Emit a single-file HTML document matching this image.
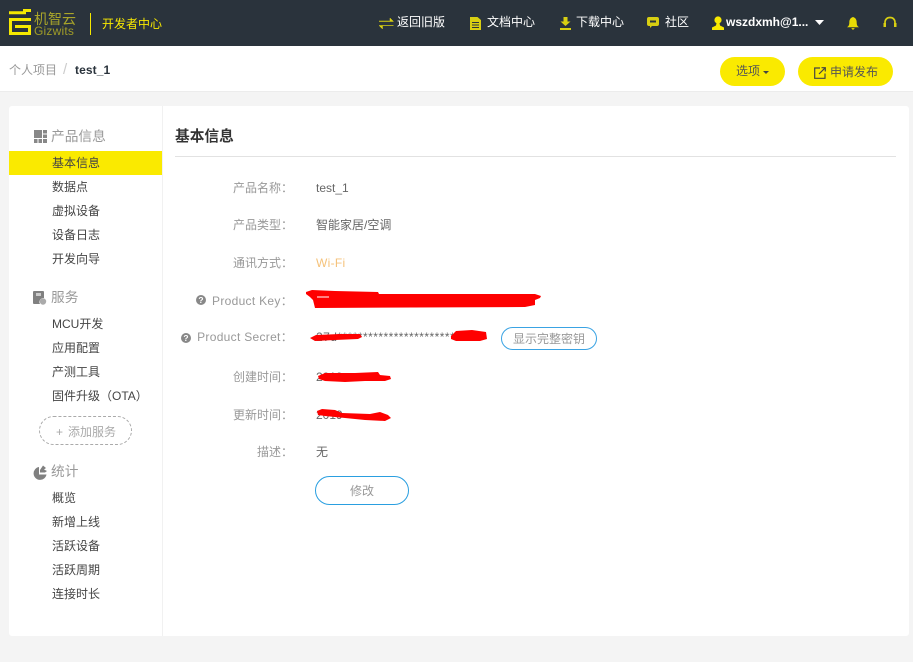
<!DOCTYPE html>
<html lang="zh"><head><meta charset="utf-8"><title>基本信息</title>
<style>
html,body{margin:0;padding:0}
body{width:913px;height:662px;overflow:hidden;background:#f4f4f4;position:relative;font-family:"Liberation Sans","Noto Sans CJK SC",sans-serif;font-size:12px;color:#333}
.a{position:absolute}
.t{position:absolute;white-space:nowrap;line-height:20px;height:20px}
.nav{color:#fff;font-size:12px;top:12px}
.m{left:52px;color:#444;font-size:12px}
.h{left:51px;color:#999;font-size:13.7px}
.l{color:#999;font-size:12px;right:620px;text-align:right}
.v{left:316px;color:#666;font-size:12px}
svg{position:absolute;display:block}
</style></head><body>
<div class="a" style="left:0;top:0;width:913px;height:46px;background:#2a333c"></div>
<svg style="left:9px;top:9px" width="23" height="27" viewBox="0 0 23 27"><path d="M0 3.800H15.500V1.500H22" fill="none" stroke="#f5e800" stroke-width="3"/><path d="M22 10.500H1.500V24.500H20.500V17.500H6" fill="none" stroke="#f5e800" stroke-width="3"/></svg>
<div class="t" style="left:34px;top:9px;color:#a9a52a;font-size:14px">机智云</div>
<div class="t" style="left:34px;top:21px;color:#a09c28;font-size:12px;letter-spacing:.2px">Gizwits</div>
<div class="a" style="left:90px;top:13px;width:1px;height:22px;background:#f5e800"></div>
<div class="t" style="left:102px;top:14px;color:#f8e900;font-size:12px">开发者中心</div>

<svg style="left:379px;top:17px" width="15" height="13" viewBox="0 0 15 13"><path d="M0 4H11V1L14.500 4.500H0ZM14.500 8.500H3.500V12L0 8.500H14.500Z" fill="#d8cf12" stroke="#d8cf12" stroke-width=".5"/></svg>
<div class="t nav" style="left:397px">返回旧版</div>
<svg style="left:470px;top:17px" width="11" height="13" viewBox="0 0 11 13"><path d="M0 0H7.500L11 3V13H0Z" fill="#d8cf12"/><path d="M2 5.500H9M2 8H9M2 10.500H9" stroke="#2a333c"/></svg>
<div class="t nav" style="left:487px">文档中心</div>
<svg style="left:560px;top:17px" width="11" height="13" viewBox="0 0 11 13"><path d="M3.500 0H7.500V4.500H10.500L5.500 9L.5 4.500H3.500ZM0 11H11V13H0Z" fill="#d8cf12"/></svg>
<div class="t nav" style="left:576px">下载中心</div>
<svg style="left:647px;top:17px" width="12" height="11" viewBox="0 0 12 11"><path d="M2 0H10Q12 0 12 2V7Q12 9 10 9H5L3 11V9H2Q0 9 0 7V2Q0 0 2 0Z" fill="#d8cf12"/><path d="M3 4.500H9" stroke="#2a333c" stroke-width="2"/></svg>
<div class="t nav" style="left:665px">社区</div>
<svg style="left:712px;top:16px" width="12" height="14" viewBox="0 0 12 14"><circle cx="6" cy="4" r="3.600" fill="#f8e900"/><path d="M4.500 7H7.500L8 9.500L12 11.500V14H0V11.500L4 9.500Z" fill="#f8e900"/></svg>
<div class="t nav" style="left:726px;font-weight:bold;font-size:12px;letter-spacing:0">wszdxmh@1...</div>
<svg style="left:815px;top:20px" width="9" height="5" viewBox="0 0 9 5"><path d="M0 0H9L4.500 5Z" fill="#fff"/></svg>
<svg style="left:847px;top:17px" width="12" height="13" viewBox="0 0 13 14"><path d="M6.500 0C9.500 1 10.500 3 10.500 6C10.500 9 11.500 10 13 11H0C1.500 10 2.500 9 2.500 6C2.500 3 3.500 1 6.500 0ZM4.500 12H8.500L6.500 14Z" fill="#e8dc05"/></svg>
<svg style="left:883px;top:16px" width="14" height="14" viewBox="0 0 14 14"><path d="M2 9V6.500C2 3.500 4 1.500 7 1.500C10 1.500 12 3.500 12 6.500V9" fill="none" stroke="#d8cf12" stroke-width="1.700"/><path d="M0.500 7H3V11H0.500ZM11 7H13.500V11H11Z" fill="#d8cf12"/></svg>

<div class="a" style="left:0;top:46px;width:913px;height:45px;background:#fff;border-bottom:1px solid #ececec"></div>
<div class="t" style="left:9px;top:60px;color:#999;font-size:12px">个人项目</div>
<div class="t" style="left:63px;top:60px;color:#ccc;font-size:15px">/</div>
<div class="t" style="left:75px;top:60px;color:#2a333c;font-size:12px;font-weight:bold;letter-spacing:.1px">test_1</div>
<div class="a" style="left:720px;top:57px;width:65px;height:29px;border-radius:15px;background:#faea00"></div>
<div class="t" style="left:736px;top:61px;color:#555;font-size:12px">选项</div>
<svg style="left:763px;top:71px" width="6" height="3" viewBox="0 0 6 3"><path d="M0 0H6L3 3Z" fill="#444"/></svg>
<div class="a" style="left:798px;top:57px;width:95px;height:29px;border-radius:15px;background:#faea00"></div>
<svg style="left:814px;top:67px" width="12" height="12" viewBox="0 0 12 12"><path d="M6 1H.700V11.300H11V6.500M5 7L11.300 .700M7.500 .700H11.300V4.500" fill="none" stroke="#444" stroke-width="1.200"/></svg>
<div class="t" style="left:830px;top:62px;color:#555;font-size:12px">申请发布</div>

<div class="a" style="left:9px;top:106px;width:900px;height:530px;background:#fff;border-radius:3px"></div>
<div class="a" style="left:162px;top:106px;width:1px;height:530px;background:#f1f1f1"></div>

<svg style="left:34px;top:130px" width="13" height="13" viewBox="0 0 13 13"><path d="M0 0H8V8H0ZM9 0H13V3.500H9ZM9 4.500H13V8H9ZM0 9H3.500V13H0ZM4.500 9H8V13H4.500ZM9 9H13V13H9Z" fill="#888"/></svg>
<div class="t h" style="top:127px">产品信息</div>
<div class="a" style="left:9px;top:151px;width:153px;height:24px;background:#faea00"></div>
<div class="t m" style="top:153px">基本信息</div>
<div class="t m" style="top:177px">数据点</div>
<div class="t m" style="top:201px">虚拟设备</div>
<div class="t m" style="top:225px">设备日志</div>
<div class="t m" style="top:249px">开发向导</div>
<svg style="left:33px;top:291px" width="14" height="14" viewBox="0 0 14 14"><path d="M1 0H10Q11 0 11 1V7A4 4 0 0 0 7 13H1Q0 13 0 12V1Q0 0 1 0Z" fill="#808080"/><circle cx="10" cy="10.500" r="3.200" fill="#aaa"/><path d="M3 2H8V5H3Z" fill="#ccc"/></svg>
<div class="t h" style="top:288px">服务</div>
<div class="t m" style="top:314px">MCU开发</div>
<div class="t m" style="top:338px">应用配置</div>
<div class="t m" style="top:362px">产测工具</div>
<div class="t m" style="top:386px">固件升级（OTA）</div>
<div class="a" style="left:39px;top:416px;width:91px;height:27px;border:1px dashed #aaa;border-radius:15px"></div>
<div class="t" style="left:56px;top:422px;color:#aaa;font-size:12px">+</div>
<div class="t" style="left:68px;top:422px;color:#aaa;font-size:12px">添加服务</div>
<svg style="left:33px;top:464px" width="14" height="16" viewBox="0 0 14 16"><path d="M6 3A6.500 6.500 0 1 0 13.500 10.500H6Z" fill="#808080"/><path d="M7 6L10 1.500L13 4L11 5.500L14 7L12 8.500H7Z" fill="#808080"/></svg>
<div class="t h" style="top:462px">统计</div>
<div class="t m" style="top:488px">概览</div>
<div class="t m" style="top:512px">新增上线</div>
<div class="t m" style="top:536px">活跃设备</div>
<div class="t m" style="top:560px">活跃周期</div>
<div class="t m" style="top:584px">连接时长</div>

<div class="t" style="left:175px;top:127px;color:#333;font-size:14.700px;font-weight:bold">基本信息</div>
<div class="a" style="left:175px;top:156px;width:721px;height:1px;background:#e2e2e2"></div>

<div class="t l" style="top:178px">产品名称：</div><div class="t v" style="top:178px">test_1</div>
<div class="t l" style="top:215px">产品类型：</div><div class="t v" style="top:215px">智能家居/空调</div>
<div class="t l" style="top:253px">通讯方式：</div><div class="t v" style="top:253px;color:#f5c27a;letter-spacing:.3px">Wi-Fi</div>
<div class="t l" style="top:291px;letter-spacing:.3px">Product Key：</div>
<svg style="left:196px;top:295px" width="10" height="10" viewBox="0 0 10 10"><circle cx="5" cy="5" r="5" fill="#888"/><text x="5" y="8.200" text-anchor="middle" font-size="8.500" font-weight="bold" fill="#fff" font-family="Liberation Sans">?</text></svg>
<div class="t l" style="top:327px;letter-spacing:.3px">Product Secret：</div>
<svg style="left:181px;top:333px" width="10" height="10" viewBox="0 0 10 10"><circle cx="5" cy="5" r="5" fill="#888"/><text x="5" y="8.200" text-anchor="middle" font-size="8.500" font-weight="bold" fill="#fff" font-family="Liberation Sans">?</text></svg>
<div class="t v" style="top:327px;letter-spacing:.45px">27d****************************</div>
<div class="a" style="left:501px;top:327px;width:94px;height:21px;border:1px solid #3aa3e3;border-radius:12px"></div>
<div class="t" style="left:513px;top:329px;color:#999;font-size:12px">显示完整密钥</div>
<div class="t l" style="top:367px">创建时间：</div><div class="t v" style="top:367px">2019</div>
<div class="t l" style="top:405px">更新时间：</div><div class="t v" style="top:405px">2019</div>
<div class="t l" style="top:442px">描述：</div><div class="t v" style="top:442px">无</div>
<div class="a" style="left:315px;top:476px;width:92px;height:27px;border:1px solid #2a9fe0;border-radius:15px"></div>
<div class="t" style="left:350px;top:481px;color:#999;font-size:12px">修改</div>

<svg style="left:0;top:0" width="913" height="662" viewBox="0 0 913 662" fill="#fe0000">
<path d="M306 292L312 290L335 291L378 292L379 294L535 294L541 296L540 298L535 300L535 305L525 307L315 308L313 300L310 297L306 294Z"/>
<path d="M317 296.500H329V297.500H317Z" fill="#fff"/>
<path d="M310 338L316 335L340 334L360 334L362 337L358 339L335 340L315 341Z"/>
<path d="M451 336L456 331L472 330L486 332L487 339L480 341L456 341L451 339Z"/>
<path d="M318 376L325 373L355 373L378 372L380 375L390 376L391 379L385 381L365 381L345 382L325 381L319 379Z"/>
<path d="M317 411L322 409L335 410L342 413L370 414L380 412L388 415L391 418L385 421L365 420L345 418L325 416L318 415Z"/>
</svg>
</body></html>
